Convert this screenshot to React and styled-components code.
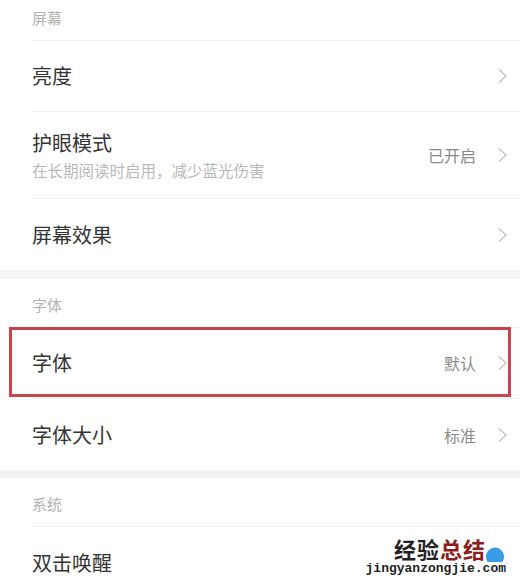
import React from "react"
import styled, { createGlobalStyle } from "styled-components"

const GlobalStyle = createGlobalStyle`
  html, body {
    margin: 0;
    padding: 0;
    background: #ffffff;
  }
  body {
    font-family: "Noto Sans CJK SC", "Noto Sans", sans-serif;
  }
`

const Screen = styled.div`
  position: relative;
  width: 520px;
  height: 587px;
  overflow: hidden;
  background: #ffffff;
`

const List = styled.div`
  display: flex;
  flex-direction: column;
  margin-top: -8px;
`

const SectionHeader = styled.div`
  height: 48px;
  box-sizing: border-box;
  padding: 16px 0 0 32px;
  font-size: 15px;
  line-height: 20px;
  color: #b3b3b3;
`

const Band = styled.div`
  height: ${p => p.$h || 9}px;
  background: #f4f4f4;
`

const Row = styled.div`
  display: flex;
  align-items: center;
  margin-left: 32px;
  padding-right: 12px;
  height: ${p => p.$h || 71}px;
  border-top: 1px solid #efefef;
`

const Texts = styled.div`
  flex: 1;
  display: flex;
  flex-direction: column;
`

const Title = styled.div`
  font-size: 20px;
  line-height: 28px;
  color: #343434;
`

const Subtitle = styled.div`
  margin-top: 2px;
  font-size: 15.5px;
  line-height: 22px;
  color: #b8b8b8;
`

const Value = styled.span`
  font-size: 16px;
  color: #8a8a8a;
  margin-right: 21px;
`

const Highlight = styled.div`
  position: relative;

  &::after {
    content: "";
    position: absolute;
    left: 9px;
    right: 9px;
    top: 0;
    bottom: 1px;
    border: 3px solid #c9434b;
    pointer-events: none;
  }
`

const Watermark = styled.div`
  position: absolute;
  right: 14px;
  bottom: 11px;
  display: flex;
  flex-direction: column;
  align-items: flex-end;
  background: #ffffff;
  padding-left: 4px;
`

const MarkTop = styled.div`
  display: flex;
  align-items: flex-end;
  height: 24px;
  margin-bottom: 2px;
  font-size: 22px;
  line-height: 24px;
  font-weight: 700;
  letter-spacing: 1px;
`

const Dark = styled.span`
  color: #222222;
`

const Red = styled.span`
  color: #8e1c1c;
`

const MarkUrl = styled.div`
  font-family: "Liberation Mono", "DejaVu Sans Mono", monospace;
  font-weight: 700;
  font-size: 13px;
  line-height: 14px;
  color: #1f1f1f;
`

const Chevron = () => (
  <svg width="11" height="16" viewBox="0 0 11 16">
    <polyline
      points="2,1.5 9,8 2,14.5"
      fill="none"
      stroke="#c4c4c4"
      strokeWidth="1.4"
    />
  </svg>
)

const Dome = () => (
  <svg width="22" height="18" viewBox="0 0 22 18" style={{ marginLeft: -2, marginBottom: -3, flexShrink: 0 }}>
    <path d="M1.5 18 A10.5 10.5 0 1 1 20.5 18 Z" fill="#ffffff" />
    <path d="M3.8 17 A9 9 0 1 1 18.2 17 Z" fill="#3a9be6" />
  </svg>
)

const Item = ({ title, subtitle, value, h }) => (
  <Row $h={h}>
    <Texts>
      <Title>{title}</Title>
      {subtitle && <Subtitle>{subtitle}</Subtitle>}
    </Texts>
    {value && <Value>{value}</Value>}
    <Chevron />
  </Row>
)

export default function App() {
  return (
    <Screen>
      <GlobalStyle />
      <List>
        <SectionHeader>屏幕</SectionHeader>
        <Item title="亮度" h={70} />
        <Item
          title="护眼模式"
          subtitle="在长期阅读时启用，减少蓝光伤害"
          value="已开启"
          h={86}
        />
        <Item title="屏幕效果" />
        <Band $h={9} />
        <SectionHeader>字体</SectionHeader>
        <Highlight>
          <Item title="字体" value="默认" h={70} />
        </Highlight>
        <Item title="字体大小" value="标准" />
        <Band $h={8} />
        <SectionHeader>系统</SectionHeader>
        <Item title="双击唤醒" h={72} />
      </List>
      <Watermark>
        <MarkTop>
          <Dark>经验</Dark>
          <Red>总结</Red>
          <Dome />
        </MarkTop>
        <MarkUrl>jingyanzongjie.com</MarkUrl>
      </Watermark>
    </Screen>
  )
}
